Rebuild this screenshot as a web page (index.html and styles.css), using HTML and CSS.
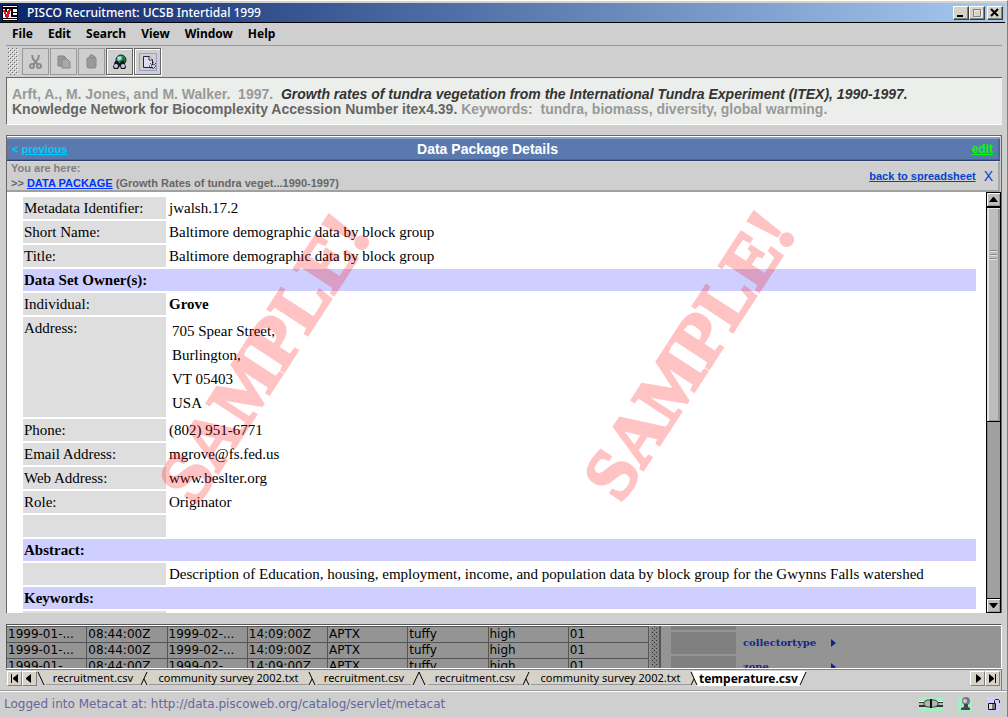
FILE: index.html
```html
<!DOCTYPE html>
<html lang="en">
<head>
<meta charset="utf-8">
<title>PISCO Recruitment: UCSB Intertidal 1999</title>
<link rel="stylesheet" href="styles.css">
</head>
<body>
<div class="window">
  <header class="titlebar">
    <svg class="app-icon" width="16" height="16" viewBox="0 0 16 16" shape-rendering="crispEdges" aria-hidden="true"><path fill="#000" d="M0 0h16v16H0z"/><path fill="#fff" d="M1 1h14v14H1z"/><path d="M1 2h14v2H1zM3 4h2v3H3zM9 4h2v8H9zM11 7h4v1h-4zM11 10h4v2h-4zM1 13h14v1H1z" fill="#000"/><path d="M2 5l3 8M8 4l-3 9M6 6v5" stroke="#e01020" stroke-width="2" fill="none"/></svg>
    <h1 class="window-title">PISCO Recruitment: UCSB Intertidal 1999</h1>
    <div class="window-buttons">
      <button class="win-btn" aria-label="Minimize"><svg width="12" height="10"><path fill="#000" d="M2 7h6v2H2z"/></svg></button>
      <button class="win-btn" aria-label="Maximize"><svg width="12" height="10"><path d="M3 2h8v7H3z" fill="none" stroke="#fff"/><path d="M2.500 1.500h7v7h-7z" fill="none" stroke="#808080"/><path d="M2 1h8v1H2z" fill="#808080"/></svg></button>
      <button class="win-btn win-close" aria-label="Close"><svg width="12" height="10"><path d="M2 1l7 7M9 1L2 8" stroke="#000" stroke-width="2"/></svg></button>
    </div>
  </header>

  <nav class="menubar">
    <button>File</button><button>Edit</button><button>Search</button><button>View</button><button>Window</button><button>Help</button>
  </nav>

  <div class="toolbar">
    <svg class="grip" width="10" height="27"><defs><pattern id="dots" width="4" height="4" patternUnits="userSpaceOnUse"><path d="M0 0h1v1H0zM2 2h1v1H2z" fill="#666"/><path d="M1 1h1v1H1zM3 3h1v1H3z" fill="#fff"/></pattern></defs><rect width="10" height="27" fill="url(#dots)"/></svg>
    <button class="tool" aria-label="Cut" disabled><svg width="16" height="16" fill="none" stroke="#8c8c8c" stroke-width="2"><path d="M4 1l1 4 5 6M11 1l-1 4-5 6"/><circle cx="4" cy="12" r="2"/><circle cx="11" cy="12" r="2"/></svg></button>
    <button class="tool" aria-label="Copy" disabled><svg width="16" height="16"><path d="M2 2h6l2 2v8H2z" fill="#999" stroke="#858585"/><path d="M6 5h5l3 3v6H6z" fill="#aaa" stroke="#858585"/></svg></button>
    <button class="tool" aria-label="Paste" disabled><svg width="16" height="16"><path d="M4 4l2-2h4l2 2v9l-1 1H4l-1-1V4z" fill="#999" stroke="#8a8a8a"/><path d="M6 4V1h3v3z" fill="#aaa" stroke="#858585"/></svg></button>
    <button class="tool active" aria-label="Search"><svg width="16" height="16"><circle cx="9" cy="6" r="5" fill="#2c9350" stroke="#123" /><path d="M5 3l4-1 1 3-4 2z" fill="#a8dce8"/><path d="M11 3l2 3-1 3-2-2z" fill="#106828"/><path d="M3 7h3l1 2h1l1-2h3l2 6-1 2H9l-1-3-2 3H2l-1-2z" fill="#15151c"/><circle cx="4" cy="12" r="2" fill="#c8cce8"/><circle cx="11" cy="12" r="2" fill="#c8cce8"/></svg></button>
    <button class="tool active" aria-label="New data package"><svg width="18" height="18"><path d="M.5.5h17v17H.5z" fill="none" stroke="#9c9cce"/><path d="M4.500 3.500h6l3 3v8h-9z" fill="#dcdcf6" stroke="#222244"/><path d="M10 3v4h4" fill="#fff" stroke="#222"/><path d="M14 9v8M10 13h8M11 10l6 6M17 10l-6 6" stroke="#111" stroke-dasharray="1 1"/><circle cx="14" cy="13" r="1" fill="#fff"/></svg></button>
  </div>

  <section class="citation">
    <p><span class="muted">Arft, A., M. Jones, and M. Walker.&nbsp; 1997.&nbsp; </span><em>Growth rates of tundra vegetation from the International Tundra Experiment (ITEX), 1990-1997.</em></p>
    <p>Knowledge Network for Biocomplexity Accession Number itex4.39. <span class="muted">Keywords:&nbsp; tundra, biomass, diversity, global warming.</span></p>
  </section>

  <main class="package">
    <div class="package-head">
      <div class="prev">&lt; <a href="#">previous</a></div>
      <h2>Data Package Details</h2>
      <a class="edit" href="#">edit</a>
    </div>
    <div class="crumbs">
      <div>
        <p class="here">You are here:</p>
        <p class="trail">&gt;&gt; <a href="#">DATA PACKAGE</a> (Growth Rates of tundra veget...1990-1997)</p>
      </div>
      <div class="crumb-actions"><a href="#">back to spreadsheet</a><button aria-label="Close details">X</button></div>
    </div>
    <div class="viewport">
      <div class="document">
        <table class="meta">
          <tbody>
          <tr><th scope="row">Metadata Identifier:</th><td>jwalsh.17.2</td></tr>
          <tr><th scope="row">Short Name:</th><td>Baltimore demographic data by block group</td></tr>
          <tr><th scope="row">Title:</th><td>Baltimore demographic data by block group</td></tr>
          <tr class="group"><th colspan="2">Data Set Owner(s):</th></tr>
          <tr><th scope="row">Individual:</th><td><b>Grove</b></td></tr>
          <tr><th scope="row">Address:</th><td class="address">705 Spear Street,<br>Burlington,<br>VT 05403<br>USA</td></tr>
          <tr><th scope="row">Phone:</th><td>(802) 951-6771</td></tr>
          <tr><th scope="row">Email Address:</th><td>mgrove@fs.fed.us</td></tr>
          <tr><th scope="row">Web Address:</th><td>www.beslter.org</td></tr>
          <tr><th scope="row">Role:</th><td>Originator</td></tr>
          <tr><th></th><td></td></tr>
          <tr class="group"><th colspan="2">Abstract:</th></tr>
          <tr><th></th><td>Description of Education, housing, employment, income, and population data by block group for the Gwynns Falls watershed</td></tr>
          <tr class="group"><th colspan="2">Keywords:</th></tr>
          <tr><th></th><td></td></tr>
          </tbody>
        </table>
        <span class="stamp stamp-left">SAMPLE!</span>
        <span class="stamp stamp-right">SAMPLE!</span>
      </div>
      <div class="scrollbar">
        <button class="scroll-btn" aria-label="Scroll up"><svg width="9" height="5"><path d="M0 5l4-5h1l4 5z"/></svg></button>
        <div class="thumb"><i></i><i></i><i></i></div>
        <div class="track"></div>
        <button class="scroll-btn" aria-label="Scroll down"><svg width="9" height="5"><path d="M0 0l4 5h1l4-5z"/></svg></button>
      </div>
    </div>
  </main>

  <section class="sheet">
    <table class="grid">
      <tbody>
      <tr><td>1999-01-...</td><td>08:44:00Z</td><td>1999-02-...</td><td>14:09:00Z</td><td>APTX</td><td>tuffy</td><td>high</td><td>01</td></tr>
      <tr><td>1999-01-...</td><td>08:44:00Z</td><td>1999-02-...</td><td>14:09:00Z</td><td>APTX</td><td>tuffy</td><td>high</td><td>01</td></tr>
      <tr><td>1999-01-...</td><td>08:44:00Z</td><td>1999-02-...</td><td>14:09:00Z</td><td>APTX</td><td>tuffy</td><td>high</td><td>01</td></tr>
      </tbody>
    </table>
    <svg class="splitter" width="11" height="43"><defs><pattern id="knurl" width="4" height="4" patternUnits="userSpaceOnUse"><path d="M0 0h1v1H0zM2 2h1v1H2z" fill="#333"/></pattern></defs><path d="M0 0h9v43H0z" fill="#858585"/><rect x="2" width="6" height="43" fill="url(#knurl)"/><path d="M9 0h2v43H9z" fill="#555"/></svg>
    <div class="columns">
      <div class="column-row first"><span class="swatch"></span></div>
      <div class="column-row"><span class="swatch"></span><span class="column-name">collectortype</span><svg width="5" height="8"><path d="M0 0l5 4-5 4z" fill="#142488"/></svg></div>
      <div class="column-row"><span class="swatch"></span><span class="column-name">zone</span><svg width="5" height="8"><path d="M0 0l5 4-5 4z" fill="#142488"/></svg></div>
    </div>
  </section>

  <div class="tabbar">
    <button class="nav-btn" aria-label="First tab"><svg width="9" height="9"><path d="M1 0h1v9H1zM8 0v9L3 5V4z"/></svg></button>
    <button class="nav-btn" aria-label="Previous tab"><svg width="9" height="9"><path d="M6 0v9L1 5V4z"/></svg></button>
    <div class="tabs">
      <svg width="9" height="15"><path d="M1 0h8v14H7z" fill="#d6d2c8"/><path d="M1 1l6 13" stroke="#000"/></svg>
      <button class="tab short">recruitment.csv</button>
      <svg width="9" height="15"><path d="M0 0h9v14H0z" fill="#d6d2c8"/><path d="M7 1L1 14M4 8l3 6" fill="none" stroke="#000"/></svg>
      <button class="tab long">community survey 2002.txt</button>
      <svg width="9" height="15"><path d="M0 0h9v14H0z" fill="#d6d2c8"/><path d="M1 1l6 13M4 8l-3 6" fill="none" stroke="#000"/></svg>
      <button class="tab short">recruitment.csv</button>
      <svg width="17" height="15"><path d="M0 0h17v14H0z" fill="#d6d2c8"/><path d="M2 15L8 1l7 14z" fill="#cfcfcf"/><path d="M2 14L8 1l6 13" fill="none" stroke="#000"/></svg>
      <button class="tab short">recruitment.csv</button>
      <svg width="9" height="15"><path d="M0 0h9v14H0z" fill="#d6d2c8"/><path d="M7 1L1 14M4 8l3 6" fill="none" stroke="#000"/></svg>
      <button class="tab long">community survey 2002.txt</button>
      <svg width="9" height="15"><path d="M0 0h5v14H0z" fill="#d6d2c8"/><path d="M2 0h7v15H7z" fill="#fff"/><path d="M1 1l6 13M4 8l-3 6" fill="none" stroke="#000"/></svg>
      <button class="tab current">temperature.csv</button>
      <svg width="9" height="15"><path d="M0 0h8L2 15H0z" fill="#fff"/><path d="M8 1L2 14" stroke="#000"/></svg>
    </div>
    <button class="nav-btn" aria-label="Next tab"><svg width="9" height="9"><path d="M3 0v9l5-4V4z"/></svg></button>
    <button class="nav-btn" aria-label="Last tab"><svg width="9" height="9"><path d="M7 0h1v9H7zM1 0v9l5-4V4z"/></svg></button>
  </div>

  <footer class="status">
    <span class="status-text">Logged into Metacat at: http://data.piscoweb.org/catalog/servlet/metacat</span>
    <svg width="24" height="14"><path fill="#a6eec0" d="M0 0h24v14H0z"/><path d="M0 4h24v2H0z" fill="#fff"/><path d="M0 5h24v1H0zM0 8h24v2H0z" fill="#333"/><path d="M0 6h24v2H0z" fill="#bbb"/><path d="M5 5l3-2h8l3 2v3l-3 2H8L5 8z" fill="#b4b4b8" stroke="#444"/><path d="M12 2v9" stroke="#111" stroke-width="2"/></svg>
    <svg width="14" height="14"><path fill="#a6eec0" d="M0 0h14v14H0z"/><circle cx="8" cy="4" r="4" fill="#778"/><path d="M6 7h4v3l2 1v2H3v-2l3-1z" fill="#445"/><circle cx="7" cy="4" r="2" fill="#ccd"/></svg>
    <svg width="13" height="14"><path fill="#cecfff" d="M0 0h13v14H0z"/><path d="M7.500 7V3.500l1-1h3l1 1V6" fill="none" stroke="#222"/><path d="M1.500 6.500h7v6h-7z" fill="#ddd" stroke="#111"/><path d="M5 7h3v5H5z" fill="#777"/></svg>
  </footer>
</div>
</body>
</html>
```
FILE: styles.css
```css
* { box-sizing: border-box; }
body { margin: 0; background: #cfcfcf; color: #000; font-family: "Liberation Sans", Arial, sans-serif; }
h1, h2, p { margin: 0; }
button { margin: 0; padding: 0; border: 0; background: none; color: inherit; font: inherit; }
svg { display: block; flex: none; }

.window { display: flex; flex-direction: column; height: 100vh; border-top: 1px solid #fff; border-right: 1px solid #808080; overflow: hidden; }

.titlebar { display: flex; align-items: center; flex: none; height: 22px; margin-right: 2px; padding: 0 2px; border-top: 2px solid #d6d2c8; border-bottom: 1px solid #000; background: linear-gradient(to right, #0a246a, #a6caf0); }
.window-title { flex: 1; padding-left: 9px; color: #fff; font: 500 12px/18px "Noto Sans", sans-serif; }
.window-buttons { display: flex; }
.win-btn { width: 16px; height: 14px; padding: 1px; background: #d6d2c8; border: 1px solid; border-color: #fff #404040 #404040 #fff; box-shadow: inset -1px -1px #808080; }
.win-close { margin-left: 2px; }

.menubar { display: flex; gap: 15px; flex: none; height: 23px; margin: 0 5px 0 6px; padding-left: 6px; border-bottom: 1px solid #999; font: bold 12px/22px "Noto Sans", sans-serif; }

.toolbar { display: flex; gap: 1px; flex: none; height: 31px; padding: 2px 8px; }
.grip { margin-right: 3px; }
.tool { display: flex; align-items: center; justify-content: center; width: 27px; height: 27px; border: 1px solid #999; }
.tool.active { border-color: #666; box-shadow: inset 1px 1px #fff, 1px 1px #fff; }

.citation { flex: none; height: 48px; margin: 0 5px 0 6px; padding: 9px 5px; background: #eceeeb; border: solid; border-width: 1px 0 1px 1px; border-color: #666 #fff #fff #666; color: #666; font-size: 14px; font-weight: bold; line-height: 15px; white-space: nowrap; overflow: hidden; }
.citation em { color: #333; }
.muted { color: #999; }

.package { display: flex; flex-direction: column; flex: 1; min-height: 0; margin: 10px 5px 0 6px; border: 1px solid #666; border-width: 1px 1px 0 1px; }
.package-head { display: grid; grid-template-columns: 1fr auto 1fr; align-items: center; flex: none; height: 25px; padding: 0 7px 0 5px; margin-right: 1px; border-top: 1px solid #fff; background: #5a7aaf; box-shadow: inset 0 2px #86a0ca, inset 0 -1px #2d3f68, inset 0 -2px #476595, inset -2px 0 #476595; font-size: 11px; font-weight: bold; }
.package-head h2 { padding-right: 30px; color: #fff; font-size: 14px; line-height: 18px; }
.prev, .prev a { color: #00ccff; }
.edit { justify-self: end; color: #00ff00; font-size: 12px; }
.crumbs { display: flex; justify-content: space-between; align-items: center; flex: none; height: 31px; margin-right: 1px; padding: 0 5px 0 4px; border: solid; border-width: 1px 2px 2px 0; border-color: #dcd6dc #a8a8a8 #a0a0a0; color: #666; font-size: 11px; font-weight: bold; line-height: 15px; }
.here { color: #808080; }
.trail a { color: #0033ff; }
.crumb-actions { display: flex; gap: 8px; color: #0044cc; }
.crumb-actions a { color: #0044cc; }
.crumb-actions button { font: 14px/15px "Liberation Sans", sans-serif; }

.viewport { display: flex; flex: 1; min-height: 0; background: #fff; }
.document { position: relative; flex: 1; min-width: 0; overflow: hidden; padding: 3px 8px 0 14px; }
.meta { width: 100%; border-spacing: 2px; font: 15px/22px "Liberation Serif", "Times New Roman", serif; }
.meta th, .meta td { height: 22px; padding: 0 1px; text-align: left; vertical-align: top; }
.meta th { width: 143px; background: #dedede; font-weight: normal; white-space: nowrap; }
.meta .group th { background: #cecfff; font-weight: bold; }
.meta .address { padding: 2px 4px; line-height: 24px; }
.stamp { position: absolute; color: #f00; -webkit-text-stroke: 3px #f00; opacity: 0.23; font: bold 72px/72px "Liberation Serif", serif; white-space: nowrap; transform: translate(-50%, -50%) rotate(-57deg); pointer-events: none; }
.stamp-left { left: 257px; top: 166px; }
.stamp-right { left: 682px; top: 163px; }

.scrollbar { display: flex; flex-direction: column; flex: none; width: 15px; border: 1px solid #000; background: #a0a0a0; }
.scroll-btn { display: flex; align-items: center; justify-content: center; height: 13px; background: #bdbdbd; box-shadow: inset 1px 1px #fff, inset -1px -1px #999; }
.thumb { display: flex; flex-direction: column; gap: 2px; flex: 172; align-items: center; padding-top: 42px; background: #bdbdbd; border: solid #000; border-width: 2px 0 1px; box-shadow: inset 2px 1px #e4e4e4, inset -2px -1px #999; }
.thumb i { width: 7px; height: 2px; border-top: 1px solid #888; background: #e4e4e4; }
.track { flex: 178; border-bottom: 1px solid #000; box-shadow: inset 1px 0 #888; }

.sheet { display: flex; align-items: flex-start; flex: none; height: 45px; margin: 11px 5px 0 6px; border: 1px solid; border-color: #555 #fff #fff #555; background: #949494; box-shadow: inset 0 1px #fff; overflow: hidden; padding-top: 1px; }
.grid { flex: none; table-layout: fixed; width: 642px; border-spacing: 0; font: 12px/15px "DejaVu Sans", sans-serif; }
.grid td { height: 16px; padding: 0 1px; border: solid #555; border-width: 0 1px 1px 0; white-space: nowrap; }
.grid tr:first-child td { border-top-width: 1px; }
.splitter { margin-left: 1px; }
.columns { display: flex; flex-direction: column; gap: 2px; flex: 1; padding-left: 10px; }
.column-row { display: flex; align-items: center; flex: none; height: 22px; }
.column-row.first { height: 4px; }
.swatch { width: 65px; height: 100%; margin-right: 7px; background: #808080; }
.column-name { width: 88px; color: #142488; font: bold 10px/22px "DejaVu Serif", serif; }

.tabbar { display: flex; align-items: flex-start; flex: none; height: 21px; margin: 0 5px 0 6px; padding: 1px 1px 0; border-top: 1px solid #808080; border-right: 1px solid #808080; }
.nav-btn { display: flex; align-items: center; justify-content: center; width: 15px; height: 15px; background: #d6d2c8; border: 1px solid; border-color: #fff #808080 #808080 #fff; }
.tabs { display: flex; flex: 1; min-width: 0; }
.tab { flex: none; height: 14px; background: #d6d2c8; border-bottom: 1px solid #999; font: 11px/13px "Noto Sans", sans-serif; white-space: nowrap; }
.tab.short { width: 94px; }
.tab.long { width: 159px; }
.tab.current { width: auto; height: 15px; background: #fff; border: 0; font-weight: bold; font-size: 12px; }

.status { display: flex; align-items: center; gap: 15px; flex: none; height: 27px; padding: 0 7px 0 4px; border-top: 1px solid #999; box-shadow: inset 0 1px #fff; color: #666699; font: 12px/20px "DejaVu Sans", sans-serif; }
.status-text { flex: 1; }
```
